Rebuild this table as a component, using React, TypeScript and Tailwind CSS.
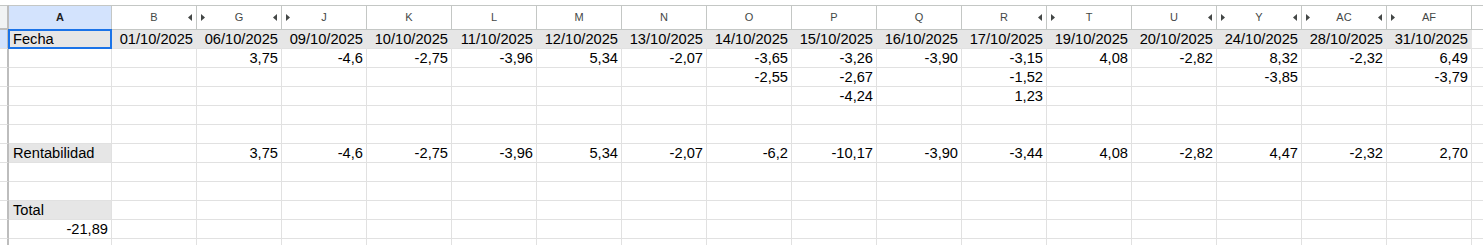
import React from 'react';

type Col = { key: string; date: string; left?: boolean; right?: boolean };

const columns: Col[] = [
    { key: 'B', date: '01/10/2025', right: true },
    { key: 'G', date: '06/10/2025', left: true, right: true },
    { key: 'J', date: '09/10/2025', left: true },
    { key: 'K', date: '10/10/2025' },
    { key: 'L', date: '11/10/2025' },
    { key: 'M', date: '12/10/2025' },
    { key: 'N', date: '13/10/2025' },
    { key: 'O', date: '14/10/2025' },
    { key: 'P', date: '15/10/2025' },
    { key: 'Q', date: '16/10/2025' },
    { key: 'R', date: '17/10/2025', right: true },
    { key: 'T', date: '19/10/2025', left: true },
    { key: 'U', date: '20/10/2025', right: true },
    { key: 'Y', date: '24/10/2025', left: true, right: true },
    { key: 'AC', date: '28/10/2025', left: true, right: true },
    { key: 'AF', date: '31/10/2025', left: true },
];

// rows below "Fecha": label in A, then one value per column
type Row = { label?: string; labelGray?: boolean; aRight?: string; values: Record<string, string> };

const rows: Row[] = [
    { values: { G: '3,75', J: '-4,6', K: '-2,75', L: '-3,96', M: '5,34', N: '-2,07', O: '-3,65', P: '-3,26', Q: '-3,90', R: '-3,15', T: '4,08', U: '-2,82', Y: '8,32', AC: '-2,32', AF: '6,49' } },
    { values: { O: '-2,55', P: '-2,67', R: '-1,52', Y: '-3,85', AF: '-3,79' } },
    { values: { P: '-4,24', R: '1,23' } },
    { values: {} },
    { values: {} },
    { label: 'Rentabilidad', labelGray: true, values: { G: '3,75', J: '-4,6', K: '-2,75', L: '-3,96', M: '5,34', N: '-2,07', O: '-6,2', P: '-10,17', Q: '-3,90', R: '-3,44', T: '4,08', U: '-2,82', Y: '4,47', AC: '-2,32', AF: '2,70' } },
    { values: {} },
    { values: {} },
    { label: 'Total', labelGray: true, values: {} },
    { aRight: '-21,89', values: {} },
    { values: {} },
];

function ArrowLeft() {
    return (
        <svg width="4" height="7" viewBox="0 0 4 7" className="absolute right-[4px] top-[8px]">
            <polygon points="4,0 4,7 0,3.5" fill="#444746" />
        </svg>
    );
}

function ArrowRight() {
    return (
        <svg width="4" height="7" viewBox="0 0 4 7" className="absolute left-[4px] top-[8px]">
            <polygon points="0,0 0,7 4,3.5" fill="#444746" />
        </svg>
    );
}

export default function App() {
    return (
        <div className="w-[1483px] h-[245px] overflow-hidden bg-white pt-[5px] font-['Liberation_Sans',Arial,sans-serif] text-black">
            <div className="grid grid-cols-[9px_103px_repeat(16,85px)_1fr]">
                {/* Column headers */}
                <div className="h-[25px] bg-[#f1f3f4] border-t border-b-2 border-r-2 border-t-[#c4c7c5] border-b-[#bdbdbd] border-r-[#bdbdbd]" />
                <div className="h-[25px] bg-[#d3e3fd] border-t border-b border-r border-t-[#c4c7c5] border-b-[#c4c7c5] border-r-[#c4c7c5] flex items-center justify-center text-[11px] font-bold text-[#1f1f1f]">
                    A
                </div>
                {columns.map((c) => (
                    <div
                        key={c.key}
                        className="relative h-[25px] border-t border-b border-r border-[#c4c7c5] flex items-center justify-center text-[11px] text-[#444746]"
                    >
                        {c.left && <ArrowRight />}
                        {c.key}
                        {c.right && <ArrowLeft />}
                    </div>
                ))}
                <div className="h-[25px] border-t border-b border-[#c4c7c5]" />

                {/* Row 1: Fecha */}
                <div className="h-[19px] bg-[#d3e3fd] border-r-2 border-b border-r-[#bdbdbd] border-b-[#e1e1e1]" />
                <div className="relative h-[19px] bg-[#e6e6e6] border-b border-r border-[#e1e1e1] px-[4px] text-[14.667px] leading-[18px] whitespace-nowrap">
                    Fecha
                    <div className="absolute -left-px -top-px -right-px -bottom-px border-2 border-[#1a73e8]" />
                </div>
                {columns.map((c) => (
                    <div
                        key={c.key}
                        className="h-[19px] bg-[#e6e6e6] border-b border-r border-b-[#e1e1e1] border-r-[#e6e6e6] pr-[3px] text-right text-[14.667px] leading-[18px] whitespace-nowrap overflow-hidden"
                    >
                        {c.date}
                    </div>
                ))}
                <div className="h-[19px] border-b border-[#e1e1e1]" />

                {/* Remaining rows */}
                {rows.map((r, i) => (
                    <React.Fragment key={i}>
                        <div className="h-[19px] border-r-2 border-b border-r-[#bdbdbd] border-b-[#e1e1e1]" />
                        <div
                            className={
                                r.labelGray
                                    ? 'h-[19px] bg-[#e6e6e6] border-b border-r border-[#e1e1e1] px-[4px] text-[14.667px] leading-[18px] whitespace-nowrap'
                                    : 'h-[19px] border-b border-r border-[#e1e1e1] px-[3px] text-right text-[14.667px] leading-[18px] whitespace-nowrap'
                            }
                        >
                            {r.label ?? r.aRight ?? ''}
                        </div>
                        {columns.map((c) => (
                            <div
                                key={c.key}
                                className="h-[19px] border-b border-r border-[#e1e1e1] pr-[3px] text-right text-[14.667px] leading-[18px] whitespace-nowrap overflow-hidden"
                            >
                                {r.values[c.key] ?? ''}
                            </div>
                        ))}
                        <div className="h-[19px] border-b border-[#e1e1e1]" />
                    </React.Fragment>
                ))}
            </div>
        </div>
    );
}
